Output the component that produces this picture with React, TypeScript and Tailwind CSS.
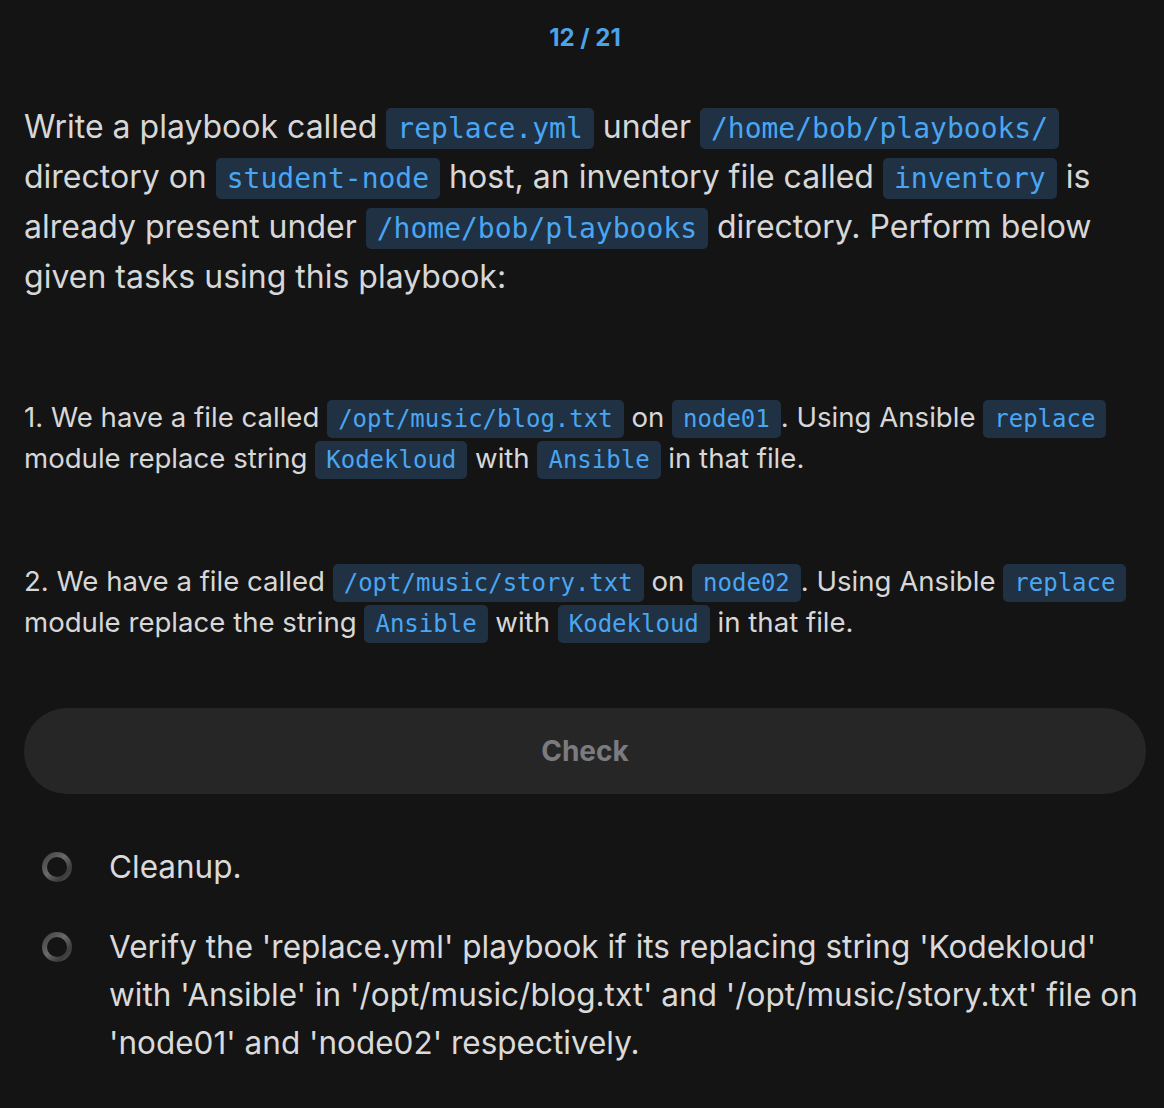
import React from "react";

type Part = string | { code: string };

const Code = ({ children, size }: { children: string; size: "lg" | "sm" }) => (
  <code
    className={
      size === "lg"
        ? "rounded-[5px] bg-[#1f3143] px-[11px] py-[4px] font-['DejaVu_Sans_Mono',monospace] text-[28px] leading-none text-[#4aa6f2]"
        : "rounded-[5px] bg-[#1f3143] px-[11px] py-[5px] font-['DejaVu_Sans_Mono',monospace] text-[24px] leading-none text-[#4aa6f2]"
    }
  >
    {children}
  </code>
);

const Rich = ({ parts, size }: { parts: Part[]; size: "lg" | "sm" }) => (
  <>
    {parts.map((p, i) =>
      typeof p === "string" ? (
        <React.Fragment key={i}>{p}</React.Fragment>
      ) : (
        <Code key={i} size={size}>
          {p.code}
        </Code>
      ),
    )}
  </>
);

const intro: Part[] = [
  "Write a playbook called ",
  { code: "replace.yml" },
  " under ",
  { code: "/home/bob/playbooks/" },
  " directory on ",
  { code: "student-node" },
  " host, an inventory file called ",
  { code: "inventory" },
  " is already present under ",
  { code: "/home/bob/playbooks" },
  " directory. Perform below given tasks using this playbook:",
];

const task1: Part[] = [
  "1. We have a file called ",
  { code: "/opt/music/blog.txt" },
  " on ",
  { code: "node01" },
  ". Using Ansible ",
  { code: "replace" },
  " module replace string ",
  { code: "Kodekloud" },
  " with ",
  { code: "Ansible" },
  " in that file.",
];

const task2: Part[] = [
  "2. We have a file called ",
  { code: "/opt/music/story.txt" },
  " on ",
  { code: "node02" },
  ". Using Ansible ",
  { code: "replace" },
  " module replace the string ",
  { code: "Ansible" },
  " with ",
  { code: "Kodekloud" },
  " in that file.",
];

const checks = [
  "Cleanup.",
  "Verify the 'replace.yml' playbook if its replacing string 'Kodekloud' with 'Ansible' in '/opt/music/blog.txt' and '/opt/music/story.txt' file on 'node01' and 'node02' respectively.",
];

const Radio = () => (
  <div className="mt-[9px] h-[30px] w-[30px] shrink-0 rounded-full bg-[linear-gradient(135deg,#3a3a3a,#6a6a6a_45%,#3c3c3c_75%,#575757)] p-[5px]">
    <div className="h-full w-full rounded-full bg-[#141414]" />
  </div>
);

export default function App() {
  return (
    <div className="min-h-screen bg-[#141414] pl-6 pr-[18px] font-['Inter',sans-serif] text-[#d7d7d7]">
      <div className="pt-[22px] text-center text-[24px] font-bold leading-[32px] text-[#4ba3ea]">
        12 / 21
      </div>

      <p className="mt-[48px] text-[32px] leading-[50px]">
        <Rich parts={intro} size="lg" />
      </p>

      <div className="mt-[95px] text-[27.6px] leading-[41px]">
        <p>
          <Rich parts={task1} size="sm" />
        </p>
        <p className="mt-[82px]">
          <Rich parts={task2} size="sm" />
        </p>
      </div>

      <button className="mt-[65px] flex h-[86px] w-full items-center justify-center rounded-full bg-[#262626] text-[28px] font-bold text-[#7b7b7f]">
        Check
      </button>

      <ul className="mt-[49px] flex flex-col gap-[32px] pb-10">
        {checks.map((c) => (
          <li key={c} className="flex gap-[37px] pl-[18px]">
            <Radio />
            <span className="text-[31.5px] leading-[48px] text-[#dadada]">{c}</span>
          </li>
        ))}
      </ul>
    </div>
  );
}
